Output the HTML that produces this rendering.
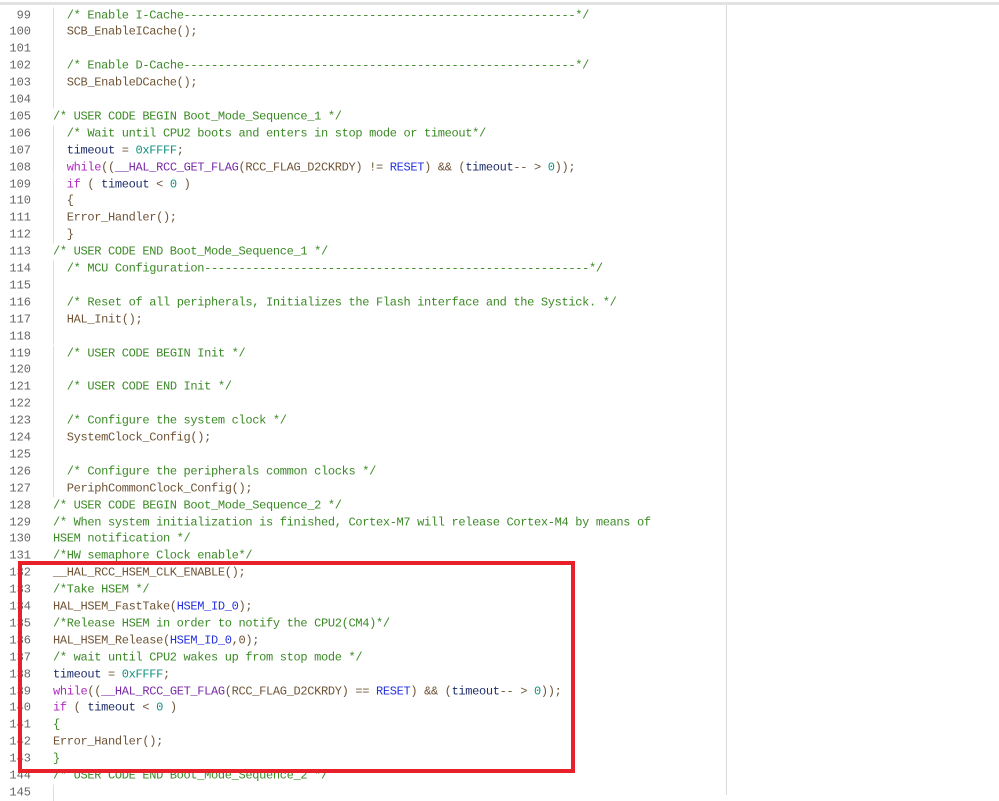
<!DOCTYPE html>
<html><head><meta charset="utf-8"><style>
body{margin:0;width:999px;height:795px;background:#fff;overflow:hidden;position:relative;font-family:"Liberation Mono",monospace;font-size:12px;letter-spacing:-0.33px}
.top{position:absolute;left:0;top:2px;width:999px;height:3px;background:#e2e2e2}
.vr{position:absolute;left:726px;top:5px;width:1px;height:790px;background:#d8d8d8}
.ln,.cd,.g{transform:translateY(2.5px)}
.ln{position:absolute;left:0;width:31px;text-align:right;color:#666;height:16.9px;line-height:16.9px;letter-spacing:0}
.cd{position:absolute;left:53px;white-space:pre;color:#6f5436;height:16.9px;line-height:16.9px}
.g{position:absolute;left:53px;width:1px;height:16.9px;background:#ddd}
.c{color:#3b8a26}.k{color:#b028c0}.v{color:#1f2f6a}.m{color:#7a2aa8}.b{color:#2430e0}.n{color:#109080}
.box{position:absolute;left:18px;top:561px;width:549px;height:204px;border:4px solid #e8202a}
</style></head><body>
<div class="top"></div><div class="vr"></div>
<div class="ln" style="top:4.5px">99</div><div class="g" style="top:4.5px"></div><div class="cd" style="top:4.5px">  <span class="c">/* Enable I-Cache---------------------------------------------------------*/</span></div>
<div class="ln" style="top:21.4px">100</div><div class="g" style="top:21.4px"></div><div class="cd" style="top:21.4px">  SCB_EnableICache();</div>
<div class="ln" style="top:38.3px">101</div><div class="g" style="top:38.3px"></div>
<div class="ln" style="top:55.2px">102</div><div class="g" style="top:55.2px"></div><div class="cd" style="top:55.2px">  <span class="c">/* Enable D-Cache---------------------------------------------------------*/</span></div>
<div class="ln" style="top:72.1px">103</div><div class="g" style="top:72.1px"></div><div class="cd" style="top:72.1px">  SCB_EnableDCache();</div>
<div class="ln" style="top:89px">104</div><div class="g" style="top:89px"></div>
<div class="ln" style="top:105.9px">105</div><div class="cd" style="top:105.9px"><span class="c">/* USER CODE BEGIN Boot_Mode_Sequence_1 */</span></div>
<div class="ln" style="top:122.8px">106</div><div class="g" style="top:122.8px"></div><div class="cd" style="top:122.8px">  <span class="c">/* Wait until CPU2 boots and enters in stop mode or timeout*/</span></div>
<div class="ln" style="top:139.7px">107</div><div class="g" style="top:139.7px"></div><div class="cd" style="top:139.7px">  <span class="v">timeout</span> = <span class="n">0xFFFF</span>;</div>
<div class="ln" style="top:156.6px">108</div><div class="g" style="top:156.6px"></div><div class="cd" style="top:156.6px">  <span class="k">while</span>((<span class="m">__HAL_RCC_GET_FLAG</span>(RCC_FLAG_D2CKRDY) != <span class="b">RESET</span>) &amp;&amp; (<span class="v">timeout</span>-- &gt; <span class="n">0</span>));</div>
<div class="ln" style="top:173.5px">109</div><div class="g" style="top:173.5px"></div><div class="cd" style="top:173.5px">  <span class="k">if</span> ( <span class="v">timeout</span> &lt; <span class="n">0</span> )</div>
<div class="ln" style="top:190.4px">110</div><div class="g" style="top:190.4px"></div><div class="cd" style="top:190.4px">  {</div>
<div class="ln" style="top:207.3px">111</div><div class="g" style="top:207.3px"></div><div class="cd" style="top:207.3px">  Error_Handler();</div>
<div class="ln" style="top:224.2px">112</div><div class="g" style="top:224.2px"></div><div class="cd" style="top:224.2px">  }</div>
<div class="ln" style="top:241.1px">113</div><div class="cd" style="top:241.1px"><span class="c">/* USER CODE END Boot_Mode_Sequence_1 */</span></div>
<div class="ln" style="top:258px">114</div><div class="g" style="top:258px"></div><div class="cd" style="top:258px">  <span class="c">/* MCU Configuration--------------------------------------------------------*/</span></div>
<div class="ln" style="top:274.9px">115</div><div class="g" style="top:274.9px"></div>
<div class="ln" style="top:291.8px">116</div><div class="g" style="top:291.8px"></div><div class="cd" style="top:291.8px">  <span class="c">/* Reset of all peripherals, Initializes the Flash interface and the Systick. */</span></div>
<div class="ln" style="top:308.7px">117</div><div class="g" style="top:308.7px"></div><div class="cd" style="top:308.7px">  HAL_Init();</div>
<div class="ln" style="top:325.6px">118</div><div class="g" style="top:325.6px"></div>
<div class="ln" style="top:342.5px">119</div><div class="g" style="top:342.5px"></div><div class="cd" style="top:342.5px">  <span class="c">/* USER CODE BEGIN Init */</span></div>
<div class="ln" style="top:359.4px">120</div><div class="g" style="top:359.4px"></div>
<div class="ln" style="top:376.3px">121</div><div class="g" style="top:376.3px"></div><div class="cd" style="top:376.3px">  <span class="c">/* USER CODE END Init */</span></div>
<div class="ln" style="top:393.2px">122</div><div class="g" style="top:393.2px"></div>
<div class="ln" style="top:410.1px">123</div><div class="g" style="top:410.1px"></div><div class="cd" style="top:410.1px">  <span class="c">/* Configure the system clock */</span></div>
<div class="ln" style="top:427px">124</div><div class="g" style="top:427px"></div><div class="cd" style="top:427px">  SystemClock_Config();</div>
<div class="ln" style="top:443.9px">125</div><div class="g" style="top:443.9px"></div>
<div class="ln" style="top:460.8px">126</div><div class="g" style="top:460.8px"></div><div class="cd" style="top:460.8px">  <span class="c">/* Configure the peripherals common clocks */</span></div>
<div class="ln" style="top:477.7px">127</div><div class="g" style="top:477.7px"></div><div class="cd" style="top:477.7px">  PeriphCommonClock_Config();</div>
<div class="ln" style="top:494.6px">128</div><div class="cd" style="top:494.6px"><span class="c">/* USER CODE BEGIN Boot_Mode_Sequence_2 */</span></div>
<div class="ln" style="top:511.5px">129</div><div class="cd" style="top:511.5px"><span class="c">/* When system initialization is finished, Cortex-M7 will release Cortex-M4 by means of</span></div>
<div class="ln" style="top:528.4px">130</div><div class="cd" style="top:528.4px"><span class="c">HSEM notification */</span></div>
<div class="ln" style="top:545.3px">131</div><div class="cd" style="top:545.3px"><span class="c">/*HW semaphore Clock enable*/</span></div>
<div class="ln" style="top:562.2px">132</div><div class="cd" style="top:562.2px">__HAL_RCC_HSEM_CLK_ENABLE();</div>
<div class="ln" style="top:579.1px">133</div><div class="cd" style="top:579.1px"><span class="c">/*Take HSEM */</span></div>
<div class="ln" style="top:596px">134</div><div class="cd" style="top:596px">HAL_HSEM_FastTake(<span class="b">HSEM_ID_0</span>);</div>
<div class="ln" style="top:612.9px">135</div><div class="cd" style="top:612.9px"><span class="c">/*Release HSEM in order to notify the CPU2(CM4)*/</span></div>
<div class="ln" style="top:629.8px">136</div><div class="cd" style="top:629.8px">HAL_HSEM_Release(<span class="b">HSEM_ID_0</span>,0);</div>
<div class="ln" style="top:646.7px">137</div><div class="cd" style="top:646.7px"><span class="c">/* wait until CPU2 wakes up from stop mode */</span></div>
<div class="ln" style="top:663.6px">138</div><div class="cd" style="top:663.6px"><span class="v">timeout</span> = <span class="n">0xFFFF</span>;</div>
<div class="ln" style="top:680.5px">139</div><div class="cd" style="top:680.5px"><span class="k">while</span>((<span class="m">__HAL_RCC_GET_FLAG</span>(RCC_FLAG_D2CKRDY) == <span class="b">RESET</span>) &amp;&amp; (<span class="v">timeout</span>-- &gt; <span class="n">0</span>));</div>
<div class="ln" style="top:697.4px">140</div><div class="cd" style="top:697.4px"><span class="k">if</span> ( <span class="v">timeout</span> &lt; <span class="n">0</span> )</div>
<div class="ln" style="top:714.3px">141</div><div class="cd" style="top:714.3px"><span class="c">{</span></div>
<div class="ln" style="top:731.2px">142</div><div class="cd" style="top:731.2px">Error_Handler();</div>
<div class="ln" style="top:748.1px">143</div><div class="cd" style="top:748.1px"><span class="c">}</span></div>
<div class="ln" style="top:765px">144</div><div class="cd" style="top:765px"><span class="c">/* USER CODE END Boot_Mode_Sequence_2 */</span></div>
<div class="ln" style="top:781.9px">145</div><div class="g" style="top:781.9px"></div>
<div class="box"></div>
</body></html>
